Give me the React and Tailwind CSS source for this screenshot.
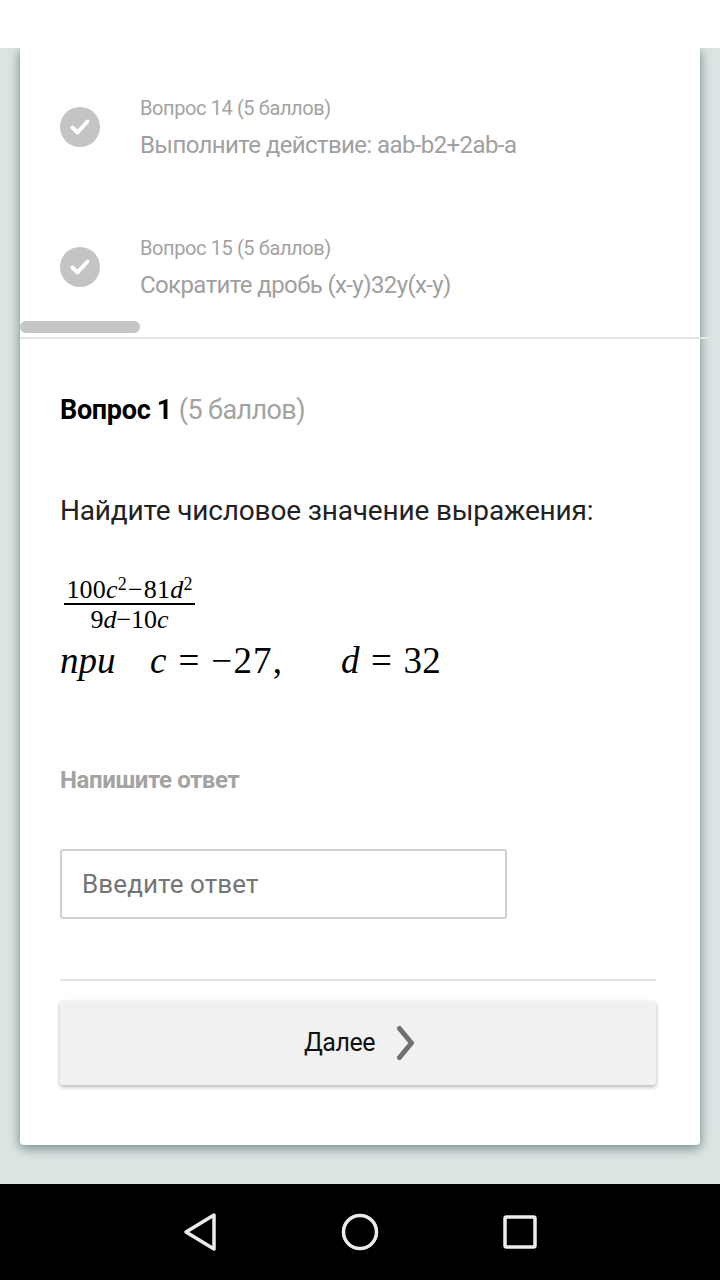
import React from "react";

const SANS = "font-['Roboto',sans-serif]";
const MATH = "font-['Liberation_Serif',serif]";

function DoneRow({ title, text }) {
  return (
    <div className="flex h-[140px] items-center">
      <div className="flex h-10 w-10 shrink-0 items-center justify-center rounded-full bg-[#c4c4c4]">
        <svg width="24" height="24" viewBox="0 0 24 24" fill="none">
          <path d="M4.5 12.5l5 5 10-11" stroke="#fff" strokeWidth="4" strokeLinecap="round" strokeLinejoin="round" />
        </svg>
      </div>
      <div className="ml-10">
        <div className="text-[20px] leading-[26px] tracking-[-0.4px] text-[#a3a3a3]">{title}</div>
        <div className="mt-[9px] text-[24px] leading-[30px] tracking-[-0.6px] text-[#a0a0a0]">{text}</div>
      </div>
    </div>
  );
}

function Sup({ children }) {
  return <sup className="relative top-[-8px] align-baseline text-[18px] leading-none">{children}</sup>;
}

function Formula() {
  return (
    <div className={`${MATH} mt-[44px] text-black`}>
      <div className="ml-[4px] inline-flex flex-col items-center">
        <div className="h-[30px] whitespace-nowrap text-[26px] leading-[33px] tracking-[0.2px]">
          100<i>c</i>
          <Sup>2</Sup>
          <span className="mx-[1px]">−</span>81<i>d</i>
          <Sup>2</Sup>
        </div>
        <div className="h-[2px] w-[131px] bg-black" />
        <div className="h-[27px] whitespace-nowrap text-[26px] leading-[30px]">
          9<i>d</i>−10<i>c</i>
        </div>
      </div>
      <div className="mt-[7px] flex h-[44px] items-center whitespace-nowrap text-[37px] leading-[44px]">
        <i className="w-[90px]">при</i>
        <span className="w-[191px]">
          <i>c</i>
          <span className="mx-[12px]">=</span>
          <span className="tracking-[1.2px]">−27,</span>
        </span>
        <span>
          <i>d</i>
          <span className="mx-[11.5px]">=</span>
          <span className="tracking-[0.3px]">32</span>
        </span>
      </div>
    </div>
  );
}

export default function App() {
  return (
    <div className={`${SANS} flex h-[1280px] w-[720px] flex-col overflow-hidden bg-[#dce5e4]`}>
      <div className="relative z-10 h-12 shrink-0 bg-white" />

      <div className="mx-5 h-[1097px] shrink-0 rounded-b-[4px] bg-white shadow-[0_3px_12px_rgba(60,85,85,0.7)]">
        {/* question list */}
        <div className="relative h-[291px] border-b-2 border-[#e4e4e4] px-10 pt-[9px]">
          <DoneRow title="Вопрос 14 (5 баллов)" text="Выполните действие: aab-b2+2ab-a" />
          <DoneRow title="Вопрос 15 (5 баллов)" text="Сократите дробь (x-y)32y(x-y)" />
          <div className="absolute bottom-[4px] left-0 h-3 w-[120px] rounded-full bg-[#c6c6c6]" />
          <div className="absolute bottom-[-2px] right-[-11px] h-[2px] w-[11px] bg-[#e4e4e4]" />
        </div>

        <div className="px-10">
          <div className="mt-[54px] text-[27px] leading-[34px]">
            <span className="font-bold tracking-[-0.3px] text-black">Вопрос 1</span>{" "}
            <span className="tracking-[-0.6px] text-[#a3a3a3]">(5 баллов)</span>
          </div>

          <div className="mt-[66px] text-[28px] leading-[36px] tracking-[-0.17px] text-[#222]">
            Найдите числовое значение выражения:
          </div>

          <Formula />

          <div className="mt-[82px] text-[24px] font-bold leading-[30px] tracking-[-0.4px] text-[#a3a3a3]">
            Напишите ответ
          </div>

          <input
            readOnly
            placeholder="Введите ответ"
            className="mt-[54px] block h-[70px] w-[447px] rounded-[3px] border-2 border-[#cfcfcf] bg-white px-5 text-[26px] tracking-[0.1px] outline-none placeholder:text-[#757575]"
          />

          <div className="mt-[60px] h-[2px] w-[596px] bg-[#e4e4e4]" />

          <button className="mt-5 flex h-[84px] w-[596px] items-center justify-center rounded-[3px] bg-[#f1f1f1] shadow-[0_2px_4px_rgba(0,0,0,0.3)]">
            <span className="ml-[4px] text-[25px] tracking-[-0.5px] text-[#111]">Далее</span>
            <svg className="ml-[21px]" width="20" height="36" viewBox="0 0 20 36" fill="none">
              <path d="M3.5 3.5L15.5 18 3.5 32.5" stroke="#707070" strokeWidth="5" strokeLinecap="round" strokeLinejoin="round" />
            </svg>
          </button>
        </div>
      </div>

      {/* android nav bar */}
      <div className="mt-[39px] flex h-24 shrink-0 items-center justify-center bg-black">
        <svg width="36" height="40" viewBox="0 0 36 40" fill="none" className="ml-[-2px]">
          <path d="M32 3L4 20l28 17z" stroke="#ececec" strokeWidth="3.5" strokeLinejoin="round" />
        </svg>
        <svg width="38" height="38" viewBox="0 0 38 38" fill="none" className="ml-[123px]">
          <circle cx="19" cy="19" r="16.5" stroke="#ececec" strokeWidth="3.5" />
        </svg>
        <svg width="34" height="34" viewBox="0 0 34 34" fill="none" className="ml-[124px]">
          <rect x="2" y="2" width="30" height="30" rx="1.5" stroke="#ececec" strokeWidth="3.5" />
        </svg>
      </div>
    </div>
  );
}
